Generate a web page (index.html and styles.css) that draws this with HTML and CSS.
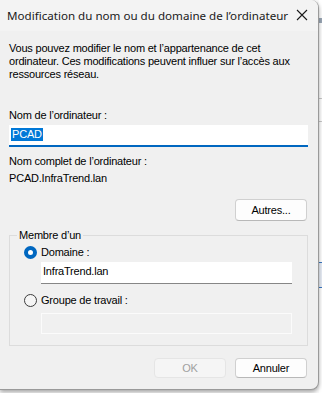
FILE: index.html
```html
<!DOCTYPE html>
<html lang="fr">
<head>
    <meta charset="UTF-8">
    <meta name="viewport" content="width=device-width, initial-scale=1.0">
    <title>Modification du nom ou du domaine de l'ordinateur</title>
    <link rel="stylesheet" href="styles.css">
</head>
<body>
    <div class="dialog">
        <div class="titlebar">
            <span class="title">Modification du nom ou du domaine de l’ordinateur</span>
            <svg class="close" width="12" height="12" viewBox="0 0 12 12">
                <path d="M1 1 L11 11 M11 1 L1 11" stroke="#1a1a1a" stroke-width="1.1" fill="none"/>
            </svg>
        </div>
        <div class="content">
            <p class="intro">Vous pouvez modifier le nom et l’appartenance de cet ordinateur. Ces modifications peuvent influer sur l’accès aux ressources réseau.</p>

            <div class="label">Nom de l’ordinateur :</div>
            <div class="textbox focused"><span class="selected">PCAD</span></div>

            <div class="label full">Nom complet de l’ordinateur :</div>
            <div class="label fqdn">PCAD.InfraTrend.lan</div>

            <div class="row right">
                <button class="btn">Autres...</button>
            </div>

            <fieldset class="group">
                <legend>Membre d’un</legend>
                <div class="radio-row">
                    <span class="radio checked"></span>
                    <span>Domaine :</span>
                </div>
                <div class="textbox sub">InfraTrend.lan</div>
                <div class="radio-row second">
                    <span class="radio"></span>
                    <span>Groupe de travail :</span>
                </div>
                <div class="textbox sub disabled"></div>
            </fieldset>

            <div class="row right actions">
                <button class="btn" disabled>OK</button>
                <button class="btn">Annuler</button>
            </div>
        </div>
    </div>
    <div class="backdrop">
        <span class="bit b1"></span>
        <span class="bit b2"></span>
        <span class="bit b3"></span>
        <span class="bit b4"></span>
    </div>
</body>
</html>
```

FILE: styles.css
```css
body {
    margin: 0;
    width: 322px;
    height: 393px;
    overflow: hidden;
    display: flex;
    background: #fafafa;
    font-family: "Liberation Sans", Arial, sans-serif;
    font-size: 11px;
    letter-spacing: -0.2px;
    color: #000;
}
.dialog {
    width: 318px;
    height: 389px;
    flex-shrink: 0;
    background: #f0f0f0;
    border-right: 1px solid #9a9a9a;
    border-bottom: 1px solid #9a9a9a;
    border-radius: 0 8px 8px 0;
    box-shadow: 0 2px 4px rgba(0, 0, 0, 0.35);
    overflow: hidden;
    position: relative;
    z-index: 1;
}
.titlebar {
    height: 31px;
    display: flex;
    align-items: center;
    justify-content: space-between;
    padding: 0 10px 0 7px;
    background: #f3f3f3;
}
.title {
    font-family: "Noto Sans", sans-serif;
    font-size: 11.6px;
    letter-spacing: 0;
    color: #1a1a1a;
}
.close {
    margin-top: -1px;
}
.content {
    padding: 0 10px 0 9px;
}
.intro {
    margin: 11px 0 0;
    line-height: 13px;
}
.label {
    line-height: 13px;
    margin-top: 28px;
}
.textbox {
    height: 22px;
    margin-top: 3px;
    background: #fff;
    border-bottom: 1px solid #8a8a8a;
    box-sizing: border-box;
    padding: 3px 2px 0;
    line-height: 13px;
}
.textbox.focused {
    border-bottom: 2px solid #0067c0;
}
.selected {
    background: #0078d7;
    color: #fff;
    display: inline-block;
    padding: 0 1px;
}
.label.full {
    margin-top: 8px;
}
.label.fqdn {
    margin-top: 4px;
}
.row {
    display: flex;
    gap: 9px;
}
.right {
    justify-content: flex-end;
    padding-right: 1px;
}
.btn {
    width: 72px;
    height: 22px;
    margin-top: 14px;
    padding: 0;
    font-family: inherit;
    font-size: 11px;
    letter-spacing: -0.2px;
    color: #000;
    background: #fdfdfd;
    border: 1px solid #d0d0d0;
    border-bottom-color: #b8b8b8;
    border-radius: 4px;
}
.btn:disabled {
    background: #f5f5f5;
    border-color: #e5e5e5;
    color: #a0a0a0;
}
.group {
    margin: 8px 0 0;
    padding: 4px 15px 11px 14px;
    border: 1px solid #dcdcdc;
    min-width: 0;
}
.group legend {
    padding: 0 2px;
    margin-left: -7px;
    line-height: 13px;
}
.radio-row {
    display: flex;
    align-items: center;
    gap: 4px;
    line-height: 13px;
}
.radio {
    width: 13px;
    height: 13px;
    box-sizing: border-box;
    border-radius: 50%;
    border: 1px solid #3c3c3c;
    background: #f5f5f5;
}
.radio.checked {
    border: 4px solid #0067c0;
    background: #fff;
}
.radio-row.second {
    margin-top: 10px;
}
.textbox.sub {
    margin: 3px 0 0 17px;
    height: 22px;
    border-bottom-color: #868686;
}
.textbox.disabled {
    height: 21px;
    margin-top: 6px;
    background: #f0f0f0;
    border: 1px solid #fbfbfb;
}
.actions .btn {
    margin-top: 12px;
    height: 20px;
}
.backdrop {
    flex: 1;
    display: flex;
    flex-direction: column;
    background: #fff;
}
.bit {
    display: block;
    height: 1px;
    background: #c8c8c8;
}
.b1 {
    margin-top: 18px;
    height: 5px;
    background: #9aa7b5;
}
.b2 {
    margin-top: 75px;
}
.b3 {
    margin-top: 22px;
}
.b4 {
    margin-top: 140px;
    height: 24px;
    background: #e8eef7;
    border-top: 1px solid #3a78c2;
    border-bottom: 1px solid #3a78c2;
}
```
